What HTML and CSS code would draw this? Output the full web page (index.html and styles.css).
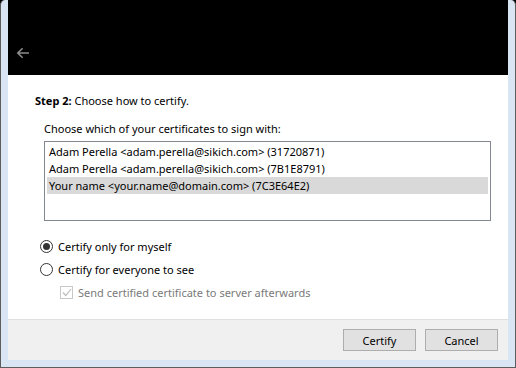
FILE: index.html
```html
<!DOCTYPE html>
<html>
<head>
<meta charset="utf-8">
<link rel="stylesheet" href="styles.css">
</head>
<body>
<div class="window">
  <div class="client">
    <div class="header">
      <svg class="back" width="14" height="12" viewBox="0 0 14 12"><path d="M13 6H1.8M6.6 1.2L1.8 6l4.8 4.8" fill="none" stroke="#8c8c8c" stroke-width="1.6"/></svg>
    </div>
    <div class="body">
      <div class="step"><b>Step 2:</b> Choose how to certify.</div>
      <div class="group">
        <div class="label">Choose which of your certificates to sign with:</div>
        <div class="listbox">
          <div class="row">Adam Perella &lt;adam.perella@sikich.com&gt; (31720871)</div>
          <div class="row">Adam Perella &lt;adam.perella@sikich.com&gt; (7B1E8791)</div>
          <div class="row selected">Your name &lt;your.name@domain.com&gt; (7C3E64E2)</div>
        </div>
      </div>
      <div class="options">
        <div class="option"><span class="radio checked"></span>Certify only for myself</div>
        <div class="option"><span class="radio"></span>Certify for everyone to see</div>
        <div class="option sub disabled"><span class="check"><svg width="10" height="9" viewBox="0 0 10 9"><path d="M1 4.5l2.8 3L9 1" fill="none" stroke="#bcbcbc" stroke-width="1.2"/></svg></span>Send certified certificate to server afterwards</div>
      </div>
    </div>
    <div class="footer">
      <button class="btn">Certify</button>
      <button class="btn">Cancel</button>
    </div>
  </div>
</div>
</body>
</html>
```
FILE: styles.css
```css
* { box-sizing: border-box; }
html, body { margin: 0; padding: 0; background: #000; }
body {
  font-family: "Segoe UI", "Noto Sans", sans-serif;
  font-size: 11px;
  color: #000;
}
.window {
  width: 516px;
  height: 368px;
  background: #dae5f3;
  border: 1px solid #5d5d5d;
  border-top: none;
  border-radius: 5px 5px 0 0;
  padding: 0 7px 7px 7px;
  display: flex;
}
.client {
  flex: 1;
  display: flex;
  flex-direction: column;
  background: #fff;
}
.header {
  height: 75px;
  background: #000;
  display: flex;
  align-items: flex-end;
  padding: 0 0 16px 8px;
}
.back { display: block; }
.body {
  flex: 1;
  padding: 18px 0 0 27px;
}
.step { line-height: 16px; }
.group { padding: 12px 0 0 9px; }
.label { line-height: 16px; }
.listbox {
  margin-top: 4px;
  width: 447px;
  height: 80px;
  border: 1px solid #828790;
  padding: 1px 2px 1px 2px;
}
.row {
  height: 17px;
  line-height: 17px;
  padding-left: 2px;
  white-space: nowrap;
}
.row.selected { background: #d9d9d9; }
.options { padding: 14px 0 0 5px; }
.option {
  display: flex;
  align-items: center;
  height: 23px;
}
.radio {
  width: 13px;
  height: 13px;
  border: 1px solid #333;
  border-radius: 50%;
  margin-right: 5px;
  position: relative;
  background: #fff;
}
.radio.checked::after {
  content: "";
  position: absolute;
  left: 2px; top: 2px;
  width: 7px; height: 7px;
  border-radius: 50%;
  background: #333;
}
.option.sub { padding-left: 20px; }
.option.disabled { color: #7a7a7a; }
.check {
  width: 13px;
  height: 13px;
  border: 1px solid #c8c8c8;
  margin-right: 5px;
  display: flex;
  align-items: center;
  justify-content: center;
}
.footer {
  height: 41px;
  background: #f0f0f0;
  border-top: 1px solid #dfdfdf;
  display: flex;
  justify-content: flex-end;
  align-items: center;
  gap: 9px;
  padding: 0 10px 0 0;
}
.btn {
  width: 73px;
  height: 22px;
  background: #e1e1e1;
  border: 1px solid #adadad;
  font: inherit;
  color: #000;
  padding: 0;
}
```
